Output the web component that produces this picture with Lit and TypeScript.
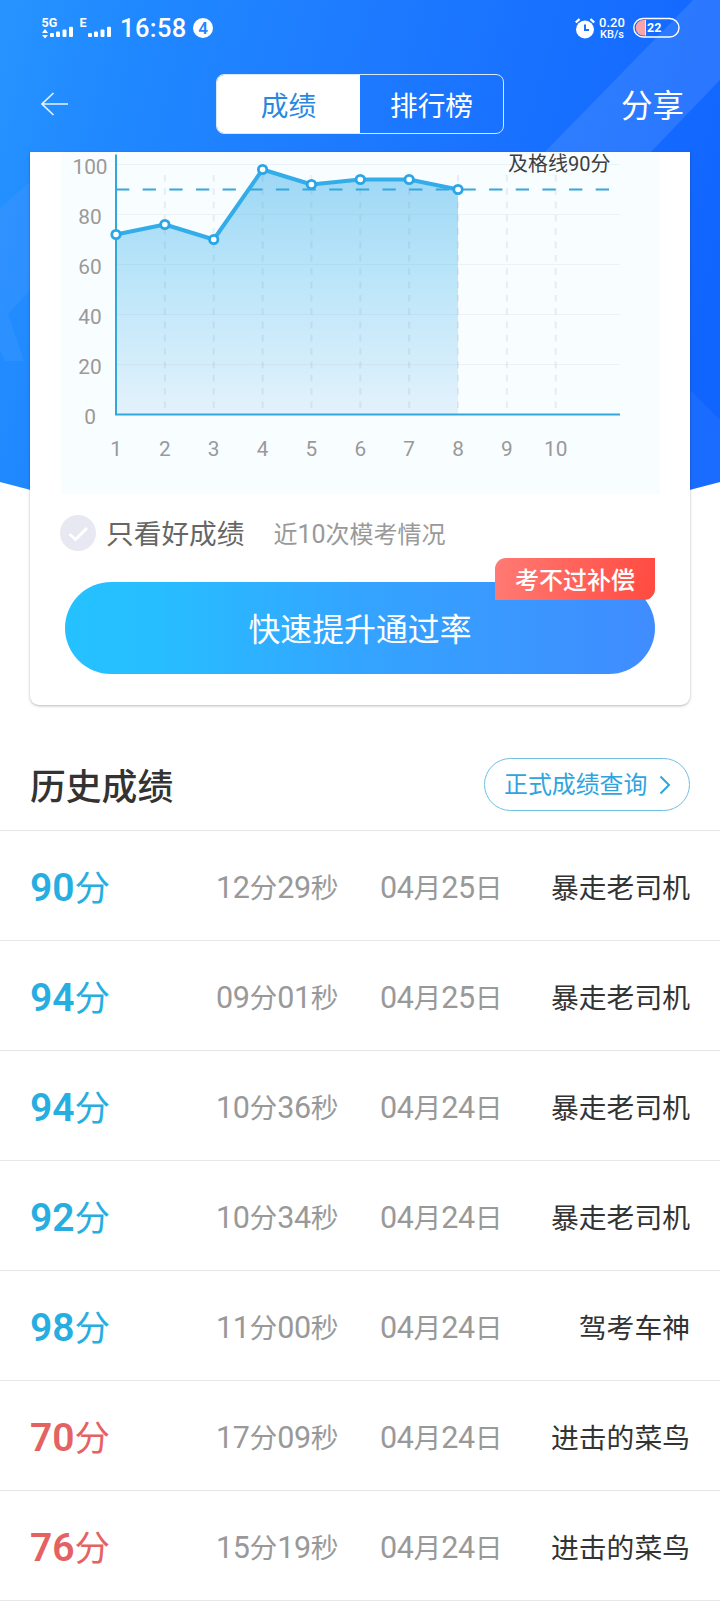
import { LitElement, html, svg, css } from "lit";
import { customElement, property } from "lit/decorators.js";
import { classMap } from "lit/directives/class-map.js";

const STEP = 48.86;
const px = (i: number) => 55 + i * STEP;
const py = (v: number) => 262.5 - v * 2.5;

/** Wraps every run of digits so that numerals can be sized apart from the characters. */
const numerals = (text: string) =>
  text
    .split(/(\d+)/)
    .filter(Boolean)
    .map((part) => (/\d/.test(part) ? html`<span class="num">${part}</span>` : part));

@customElement("status-bar")
class StatusBar extends LitElement {
  static styles = css`
    :host {
      display: flex;
      align-items: flex-start;
      height: 74px;
      padding: 14px 40px 0 41px;
      box-sizing: border-box;
      color: #fff;
      font-family: Roboto, sans-serif;
    }
    .time {
      width: 66px;
      margin-left: 8px;
      font-size: 25.500px;
      line-height: 28px;
      font-weight: 500;
      letter-spacing: 0.4px;
      white-space: nowrap;
    }
    .count {
      width: 20px;
      height: 20px;
      margin: 4px 0 0 7px;
      border-radius: 50%;
      background: #fff;
      color: #2584ff;
      font-size: 17px;
      line-height: 20px;
      font-weight: 600;
      text-align: center;
    }
    .alarm {
      margin: 4px 4px 0 auto;
    }
    .rate {
      width: 26px;
      margin-right: 8px;
      padding-top: 3px;
      font-size: 13px;
      line-height: 12px;
      font-weight: 500;
      text-align: center;
      white-space: nowrap;
    }
    .unit {
      font-size: 11px;
      line-height: 11px;
    }
    svg {
      display: block;
      flex: none;
      overflow: visible;
    }
    text {
      font-weight: 700;
      fill: #fff;
    }
  `;
  render() {
    return html`
      <svg width="71" height="26" viewBox="0 0 71 26" fill="#fff">
        <text x="0.500" y="12.500" font-size="12.500">5G</text>
        <path d="M4 15l3 4H1zM4 24.500l3-3.500H1z" />
        <rect x="9" y="19" width="4" height="4" rx="1" />
        <rect x="15" y="17.500" width="4" height="5.500" rx="1" />
        <rect x="21.500" y="15.500" width="4" height="7.500" rx="1" />
        <rect x="28" y="12.700" width="4" height="10.300" rx="1" />
        <text x="38.500" y="12.500" font-size="12.500">E</text>
        <rect x="47" y="19" width="4" height="4" rx="1" />
        <rect x="53" y="17.500" width="4" height="5.500" rx="1" />
        <rect x="59.500" y="15.500" width="4" height="7.500" rx="1" />
        <rect x="66" y="12.700" width="4" height="10.300" rx="1" />
      </svg>
      <span class="time">16:58</span>
      <span class="count">4</span>
      <svg class="alarm" width="20" height="21" viewBox="0 0 20 21">
        <circle cx="10" cy="11.500" r="9" fill="#fff" />
        <path d="M.8 4.500L4.500 1M19.200 4.500L15.500 1" stroke="#fff" stroke-width="2.400" />
        <path d="M10 6.500v5.500h4" stroke="#1a70ff" stroke-width="2" fill="none" />
      </svg>
      <div class="rate">0.20<div class="unit">KB/s</div></div>
      <svg width="47" height="26" viewBox="0 0 47 26">
        <rect x=".8" y="4.500" width="45.200" height="18.500" rx="9.250" fill="none" stroke="#fff" stroke-width="1.400" />
        <path d="M12.500 6v15.500h-2a7.750 7.750 0 0 1 0-15.500z" fill="#fba3a6" />
        <path d="M12.500 6v15.500" stroke="#ffe0e0" />
        <text x="14" y="18" font-size="12.500" font-weight="500">22</text>
      </svg>
    `;
  }
}

@customElement("nav-bar")
class NavBar extends LitElement {
  static styles = css`
    :host {
      display: flex;
      align-items: center;
      height: 60px;
      padding: 0 36px 0 41px;
      color: #fff;
    }
    .tabs {
      display: flex;
      width: 288px;
      height: 60px;
      margin-left: 147px;
      box-sizing: border-box;
      border: 1px solid #d7e8ff;
      border-radius: 8px;
      overflow: hidden;
      font-size: 27.700px;
      line-height: 59px;
      text-align: center;
    }
    .tab {
      flex: 1;
    }
    .on {
      background: #fff;
      color: #2887e0;
    }
    .share {
      margin-left: auto;
      font-size: 31.500px;
      line-height: 58px;
      height: 60px;
    }
    svg {
      display: block;
    }
  `;
  render() {
    return html`
      <svg width="28" height="26" viewBox="0 0 28 26" fill="none" stroke="#e6f2ff" stroke-width="1.600">
        <path d="M27 13H1.500M12.500 2L1 13l11.500 11" />
      </svg>
      <div class="tabs">
        <div class="tab on">成绩</div>
        <div class="tab">排行榜</div>
      </div>
      <div class="share">分享</div>
    `;
  }
}

@customElement("score-chart")
class ScoreChart extends LitElement {
  @property({ attribute: false }) scores: number[] = [];
  static styles = css`
    :host {
      display: block;
    }
    svg {
      display: block;
      background: #f8fdff;
    }
    text {
      font-family: Roboto, sans-serif;
      font-size: 20.800px;
      fill: #999;
      text-anchor: middle;
    }
    .pass {
      font-family: Roboto, "Noto Sans CJK SC", sans-serif;
      font-size: 20px;
      fill: #3c3f42;
      text-anchor: start;
    }
  `;
  render() {
    const pts = this.scores.map((v, i) => [px(i), py(v)]);
    const line = pts.map((p) => p.join(",")).join(" ");
    const last = pts.length - 1;
    return html`
      <svg width="599" height="342" viewBox="0 0 599 342">
        <defs>
          <linearGradient id="fill" x1="0" y1="0" x2="0" y2="1">
            <stop offset="0" stop-color="#9dd7f5" />
            <stop offset=".4" stop-color="#b8e4f9" />
            <stop offset="1" stop-color="#e3f2fc" />
          </linearGradient>
        </defs>
        <polygon points="${px(0)},262.500 ${line} ${px(last)},262.500" fill="url(#fill)" />
        ${[20, 40, 60, 80, 100].map(
          (v) => svg`<path d="M55 ${py(v)}H559" stroke="#8aa4b0" stroke-opacity=".11" />`
        )}
        ${Array.from({ length: 9 }, (_, i) => px(i + 1)).map(
          (x) => svg`<path d="M${x} 23V257" stroke="#8795a0" stroke-opacity=".15" stroke-width="2" stroke-dasharray="6.660 6.660" />`
        )}
        <path d="M55 37.500H549" stroke="#35a7dd" stroke-width="2" stroke-dasharray="13.300 13.350" />
        <path d="M55 2.500V262.500H559" fill="none" stroke="#32a7dc" stroke-width="2" />
        <polyline points=${line} fill="none" stroke="#33acea" stroke-width="4" stroke-linejoin="round" />
        ${pts.map(
          ([x, y]) => svg`<circle cx=${x} cy=${y} r="4.200" fill="#fff" stroke="#2aa6e6" stroke-width="2.800" />`
        )}
        ${[0, 20, 40, 60, 80, 100].map((v) => svg`<text x="29" y=${py(v) + 9}>${v}</text>`)}
        ${Array.from({ length: 10 }, (_, i) => svg`<text x=${px(i)} y="303.500">${i + 1}</text>`)}
        <text class="pass" x="447" y="19">及格线90分</text>
      </svg>
    `;
  }
}

interface Result {
  score: number;
  time: string;
  date: string;
  rank: string;
}

@customElement("history-row")
class HistoryRow extends LitElement {
  @property({ attribute: false }) item!: Result;
  static styles = css`
    :host {
      display: grid;
      grid-template-columns: 186px 164px 1fr auto;
      align-items: center;
      height: 110px;
      box-sizing: border-box;
      padding: 0 30px;
      border-top: 1px solid #e7e7e7;
      font-size: 27.800px;
      line-height: 44px;
      color: #333;
      white-space: nowrap;
    }
    .num {
      font-family: Roboto, sans-serif;
      line-height: 1;
    }
    .score {
      font-size: 35.500px;
      color: #27aee1;
    }
    .score .num {
      font-size: 39px;
      font-weight: 600;
    }
    .fail {
      color: #e56262;
    }
    .meta {
      color: #999;
    }
    .meta .num {
      font-size: 30.500px;
      letter-spacing: -0.400px;
    }
  `;
  render() {
    const { score, time, date, rank } = this.item;
    return html`
      <div class=${classMap({ score: true, fail: score < 90 })}>${numerals(score + "分")}</div>
      <div class="meta">${numerals(time)}</div>
      <div class="meta">${numerals(date)}</div>
      <div>${rank}</div>
    `;
  }
}

@customElement("app-root")
class AppRoot extends LitElement {
  private history: Result[] = [
    { score: 90, time: "12分29秒", date: "04月25日", rank: "暴走老司机" },
    { score: 94, time: "09分01秒", date: "04月25日", rank: "暴走老司机" },
    { score: 94, time: "10分36秒", date: "04月24日", rank: "暴走老司机" },
    { score: 92, time: "10分34秒", date: "04月24日", rank: "暴走老司机" },
    { score: 98, time: "11分00秒", date: "04月24日", rank: "驾考车神" },
    { score: 70, time: "17分09秒", date: "04月24日", rank: "进击的菜鸟" },
    { score: 76, time: "15分19秒", date: "04月24日", rank: "进击的菜鸟" },
  ];
  static styles = css`
    :host {
      display: block;
      width: 720px;
      height: 1605px;
      overflow: hidden;
      background: #fff;
      font-family: "Noto Sans CJK SC", sans-serif;
    }
    .top {
      display: grid;
    }
    .backdrop,
    .front {
      grid-area: 1 / 1;
    }
    .backdrop {
      display: block;
    }
    .card {
      height: 553px;
      margin: 18px 30px 0;
      background: #fff;
      border-radius: 0 0 9px 9px;
      box-shadow: 0 1px 3px rgba(0, 0, 0, 0.28);
    }
    .chart {
      margin: 0 30px 0 31px;
    }
    .filter {
      display: flex;
      align-items: center;
      height: 78px;
      padding-left: 30px;
      color: #666;
      font-size: 27.700px;
      line-height: 40px;
    }
    .label {
      padding-bottom: 3px;
    }
    .check {
      margin-right: 10px;
    }
    .note {
      margin-left: 29px;
      padding-bottom: 1px;
      color: #999;
      font-size: 24px;
    }
    .num {
      font-family: Roboto, sans-serif;
      font-size: 25px;
      line-height: 1;
    }
    .cta {
      position: relative;
      height: 92px;
      margin: 10px 35px 0;
      border-radius: 46px;
      background: linear-gradient(90deg, #25c1ff 0%, #27beff 15%, #34a4ff 50%, #408cff 100%);
      color: #fff;
      font-size: 31.900px;
      line-height: 91px;
      text-align: center;
    }
    .tag {
      position: absolute;
      top: -24px;
      right: 0;
      width: 160px;
      height: 42px;
      border-radius: 11px 0 11px 0;
      background: linear-gradient(100deg, #ff7b74, #ff4a40);
      font-size: 24px;
      line-height: 42px;
      font-weight: 500;
    }
    .heading {
      display: flex;
      align-items: center;
      justify-content: space-between;
      height: 53px;
      padding: 53px 30px 19px;
    }
    .title {
      font-size: 35.800px;
      line-height: 53px;
      font-weight: 500;
      color: #333;
    }
    .query {
      display: flex;
      align-items: center;
      width: 206px;
      height: 53px;
      padding: 0 18px 0 19px;
      box-sizing: border-box;
      justify-content: space-between;
      border: 1px solid #6fbfe2;
      border-radius: 27px;
      color: #2ea4e0;
      font-size: 23.900px;
      line-height: 48px;
    }
    .official {
      height: 51px;
    }
    .end {
      height: 5px;
      border-top: 1px solid #e7e7e7;
    }
  `;
  render() {
    return html`
      <div class="top">
        <svg class="backdrop" width="720" height="520" viewBox="0 0 720 520">
          <defs>
            <linearGradient id="sky" gradientUnits="userSpaceOnUse" x1="0" y1="60" x2="720" y2="250">
              <stop offset="0" stop-color="#2693ff" />
              <stop offset=".15" stop-color="#2089ff" />
              <stop offset=".5" stop-color="#1d79ff" />
              <stop offset="1" stop-color="#1165ff" />
            </linearGradient>
            <clipPath id="dome"><path d="M0 0H720V482Q360 580 0 482Z" /></clipPath>
          </defs>
          <g clip-path="url(#dome)">
            <rect width="720" height="520" fill="url(#sky)" />
            <path d="M693 0H720V80L600 205H493z" fill="#fff" fill-opacity=".1" />
            <path d="M0 208L40 173V280L8 314L0 296z" fill="#4c9cff" fill-opacity=".28" />
            <path d="M0 296L8 314L24 361H5L0 350z" fill="#7db4ff" fill-opacity=".12" />
            <path d="M680 380L720 420V520H680z" fill="#3b83ff" fill-opacity=".22" />
          </g>
        </svg>
        <div class="front">
          <status-bar></status-bar>
          <nav-bar></nav-bar>
          <div class="card">
            <score-chart class="chart" .scores=${[72, 76, 70, 98, 92, 94, 94, 90]}></score-chart>
            <div class="filter">
              <svg class="check" width="36" height="36" viewBox="0 0 36 36">
                <circle cx="18" cy="18" r="18" fill="#e8e8f2" />
                <path d="M9.500 19l6 5.500L27 13" fill="none" stroke="#fff" stroke-width="3" />
              </svg>
              <span class="label">只看好成绩</span>
              <span class="note">${numerals("近10次模考情况")}</span>
            </div>
            <div class="cta">快速提升通过率<span class="tag">考不过补偿</span></div>
          </div>
        </div>
      </div>
      <div class="heading">
        <div class="title">历史成绩</div>
        <div class="query">
          <span class="official">正式成绩查询</span>
          <svg width="12" height="20" viewBox="0 0 12 20" fill="none" stroke="#2ea4e0" stroke-width="2">
            <path d="M1.500 1.500L10 10l-8.500 8.500" />
          </svg>
        </div>
      </div>
      ${this.history.map((item) => html`<history-row .item=${item}></history-row>`)}
      <div class="end"></div>
    `;
  }
}
